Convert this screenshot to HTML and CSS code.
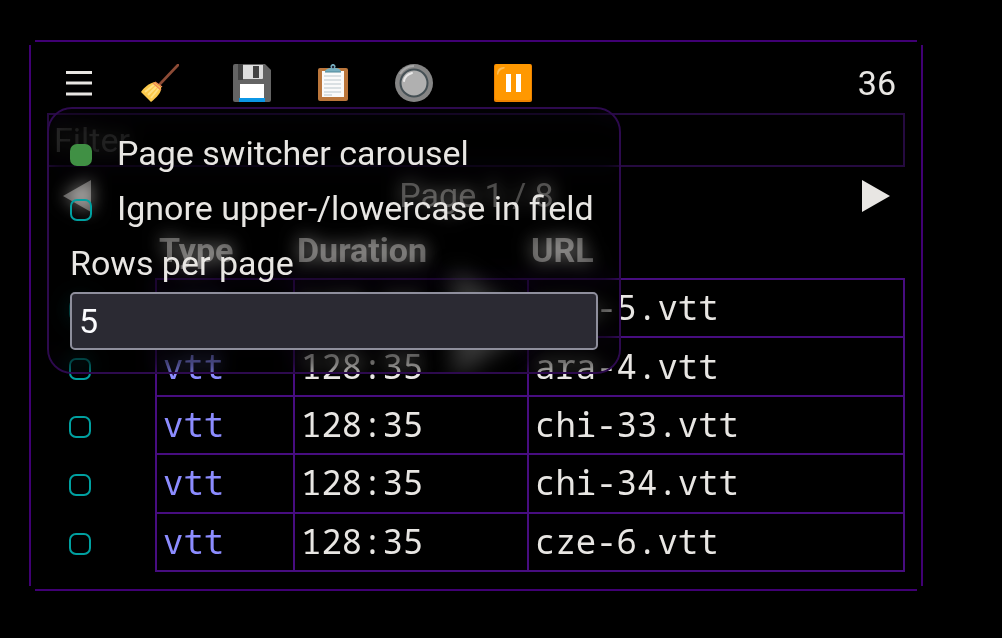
FILE: index.html
```
<!DOCTYPE html>
<html lang="en">
<head>
<meta charset="utf-8">
<title>Media list</title>
<link rel="stylesheet" href="styles.css">
</head>
<body>
<main class="card">
  <header class="toolbar">
    <button class="tool" aria-label="Menu"><svg viewBox="0 0 38 38"><path d="M6 8.5h26M6 19h26M6 30h26" stroke="#e8e6e3" stroke-width="3"/></svg></button>
    <button class="tool" aria-label="Clear"><svg viewBox="0 0 38 38"><path d="M37 1 19 20" stroke="#8d4b36" stroke-width="2.6" stroke-linecap="round"/><path d="M14 18 20 23C21 28 16 33 10 38L0 28C3 23 9 19 14 18Z" fill="#fbc94b"/><path d="M4 28 14 20M7 31 16 22M10 34 18 24" stroke="#ffe082" stroke-width="2"/><path d="m12 19 8 7M14 18l7 5" stroke="#f28b55" stroke-width="1.5"/></svg></button>
    <button class="tool tool-group" aria-label="Save"><svg viewBox="0 0 38 38"><path d="M2 0h30l6 6v30a2 2 0 0 1-2 2H2a2 2 0 0 1-2-2V2a2 2 0 0 1 2-2Z" fill="#646464"/><path d="M5 0h5v16H5Z" fill="#424242"/><path d="M10 1h20v13a1 1 0 0 1-1 1H10Z" fill="#dedede"/><path d="M20 2h6v12h-6Z" fill="#424242"/><path d="M7 20h24v15H7Z" fill="#fff"/><path d="M6 34h26v4H6Z" fill="#0b96e5"/></svg></button>
    <button class="tool" aria-label="Copy"><svg viewBox="0 0 38 38"><rect x="4" y="4" width="30" height="33" rx="2" fill="#bb763b"/><path d="M8 7h22v26H8Z" fill="#fafafa"/><path d="M10 12h17M10 16h17M10 20h17M10 24h17M10 28h17M10 31h8" stroke="#cfd8dc" stroke-width="1.6"/><path d="M11 8C11 5 15 4 17 4a2.5 2.5 0 1 1 4 0c3 0 6 1 6 4Z" fill="#76aebf"/><circle cx="19" cy="3" r="1.2" fill="#223"/><path d="M11 8h16" stroke="#4c8798"/></svg></button>
    <button class="tool" aria-label="Record"><svg viewBox="0 0 38 38"><circle cx="19" cy="19" r="19" fill="#858585"/><path d="M5 10A17 17 0 0 1 19 2" fill="none" stroke="#a9a9a9" stroke-width="2"/><circle cx="19" cy="19" r="13.5" fill="#b0b0b0" stroke="#455055" stroke-width="2"/><path d="M9 17q1-6 8-8" fill="none" stroke="#e8e8e8" stroke-width="2" stroke-linecap="round"/></svg></button>
    <button class="tool tool-end" aria-label="Pause"><svg viewBox="0 0 38 38"><rect width="38" height="38" rx="2" fill="#ef8200"/><rect x="1" width="36" height="36" rx="2" fill="#ff9800"/><path d="M3 10Q3 3 10 3q2 1-1 2-4 1-5 6Z" fill="#ffbd52"/><path d="M12 10h5v18h-5ZM22 10h5v18h-5Z" fill="#fff"/></svg></button>
    <output class="count">36</output>
  </header>

  <input class="filter" type="text" placeholder="Filter" aria-label="Filter">

  <nav class="pager">
    <button class="arrow" aria-label="Previous page"><svg viewBox="0 0 28 34"><path d="M28 1v32L0 17Z"/></svg></button>
    <span class="page">Page 1 / 8</span>
    <button class="arrow" aria-label="Next page"><svg viewBox="0 0 28 34"><path d="M0 1v32l28-16Z"/></svg></button>
  </nav>

  <table class="list">
    <colgroup><col class="col-check"><col class="col-type"><col class="col-time"><col></colgroup>
    <thead><tr><td></td><th>Type</th><th>Duration</th><th>URL</th></tr></thead>
    <tbody>
      <tr><td><input class="check" type="checkbox" aria-label="ara-5.vtt"></td><td class="type">vtt</td><td>128:35</td><td>ara-5.vtt</td></tr>
      <tr><td><input class="check" type="checkbox" aria-label="ara-4.vtt"></td><td class="type">vtt</td><td>128:35</td><td>ara-4.vtt</td></tr>
      <tr><td><input class="check" type="checkbox" aria-label="chi-33.vtt"></td><td class="type">vtt</td><td>128:35</td><td>chi-33.vtt</td></tr>
      <tr><td><input class="check" type="checkbox" aria-label="chi-34.vtt"></td><td class="type">vtt</td><td>128:35</td><td>chi-34.vtt</td></tr>
      <tr><td><input class="check" type="checkbox" aria-label="cze-6.vtt"></td><td class="type">vtt</td><td>128:35</td><td>cze-6.vtt</td></tr>
    </tbody>
  </table>

  <section class="menu">
    <div class="menu-glass"></div>
    <svg class="menu-glow" viewBox="0 0 120 150"><path d="M30 20v110l80-55Z"/></svg>
    <div class="menu-body">
      <label class="option"><input class="check" type="checkbox" checked>Page switcher carousel</label>
      <label class="option"><input class="check" type="checkbox">Ignore upper-/lowercase in field</label>
      <label class="option" for="rows">Rows per page</label>
      <input class="rows" id="rows" type="text" inputmode="numeric" value="5">
    </div>
  </section>
</main>
</body>
</html>
```

FILE: styles.css
```
* { box-sizing: border-box; }

body {
  margin: 0;
  padding: 40px 79px 40px 29px;
  background: #000;
  color: #e8e6e3;
  font: 34px/40px Roboto, sans-serif;
}

button {
  padding: 0;
  border: 0;
  background: none;
  color: inherit;
}

svg { display: block; }

/* Frame drawn as four lines that stop short of the corners */
.card {
  --line: linear-gradient(#400074, #400074);
  position: relative;
  padding: 15px 18px 19px;
  background:
    var(--line) center top / calc(100% - 12px) 2px no-repeat,
    var(--line) center bottom / calc(100% - 12px) 2px no-repeat,
    var(--line) left center / 2px calc(100% - 10px) no-repeat,
    var(--line) right center / 2px calc(100% - 10px) no-repeat;
}

.toolbar {
  display: flex;
  align-items: center;
  gap: 43px;
  height: 58px;
  padding: 0 9px 2px 13px;
}

.tool { width: 38px; height: 38px; }
.tool svg { width: 38px; height: 38px; }
.tool-group { margin-left: 11px; }
.tool-end { margin-left: 18px; }
.count { margin-left: auto; }

.filter {
  display: block;
  width: 100%;
  height: 54px;
  padding: 0 5px;
  border: 2px solid #250a40;
  background: transparent;
  color: inherit;
  font: inherit;
}
.filter::placeholder { color: #444; opacity: 1; }

.pager {
  display: flex;
  align-items: center;
  justify-content: space-between;
  height: 58px;
  padding: 0 15px 0 16px;
}
.page { padding-bottom: 2px; color: #c9c7c4; }
.arrow svg { width: 28px; height: 34px; fill: #e8e6e3; }

.list {
  width: 100%;
  height: 347px;
  border-collapse: collapse;
  table-layout: fixed;
  font-family: "Noto Sans Mono", "Droid Sans Mono", "DejaVu Sans Mono", monospace;
}
.col-check { width: 109px; }
.col-type { width: 138px; }
.col-time { width: 234px; }
.list td { padding: 0 6px 2px; text-align: left; }
.list thead tr { height: 54px; }
.list th {
  padding: 0 3px 4px;
  font-family: Roboto, sans-serif;
  font-weight: 700;
  text-align: left;
}
.list tbody td + td { border: 2px solid #470d80; }
.list tbody td:first-child { padding: 4px 0 0 22px; }
.list .type { color: #8c8cff; }

.check {
  appearance: none;
  display: block;
  flex: none;
  width: 22px;
  height: 22px;
  margin: 0;
  border: 2px solid #00a0a0;
  border-radius: 7px;
}
.check:checked { border-color: #409044; background: #409044; }

.menu {
  position: absolute;
  top: 67px;
  left: 18px;
  border: 2px solid #2d0a4e;
  border-radius: 25px;
  overflow: hidden;
}
.menu-glass {
  position: absolute;
  inset: 0;
  opacity: .68;
  backdrop-filter: blur(9px) brightness(.8);
}
.menu-glow {
  position: absolute;
  top: 140px;
  left: 375px;
  width: 120px;
  height: 150px;
  fill: #3a3a3a;
  filter: blur(11px);
}
.menu-body {
  position: relative;
  padding: 16px 21px 22px;
}
.option {
  display: flex;
  align-items: center;
  gap: 25px;
  height: 55px;
  padding-right: 4px;
  white-space: nowrap;
}
.option .check { margin-top: 4px; }
.rows {
  display: block;
  width: 100%;
  height: 58px;
  margin-top: 2px;
  padding: 0 7px;
  border: 2px solid #8f8f9d;
  border-radius: 5px;
  background: #2b2a33;
  color: #fbfbfe;
  font: inherit;
}
```
